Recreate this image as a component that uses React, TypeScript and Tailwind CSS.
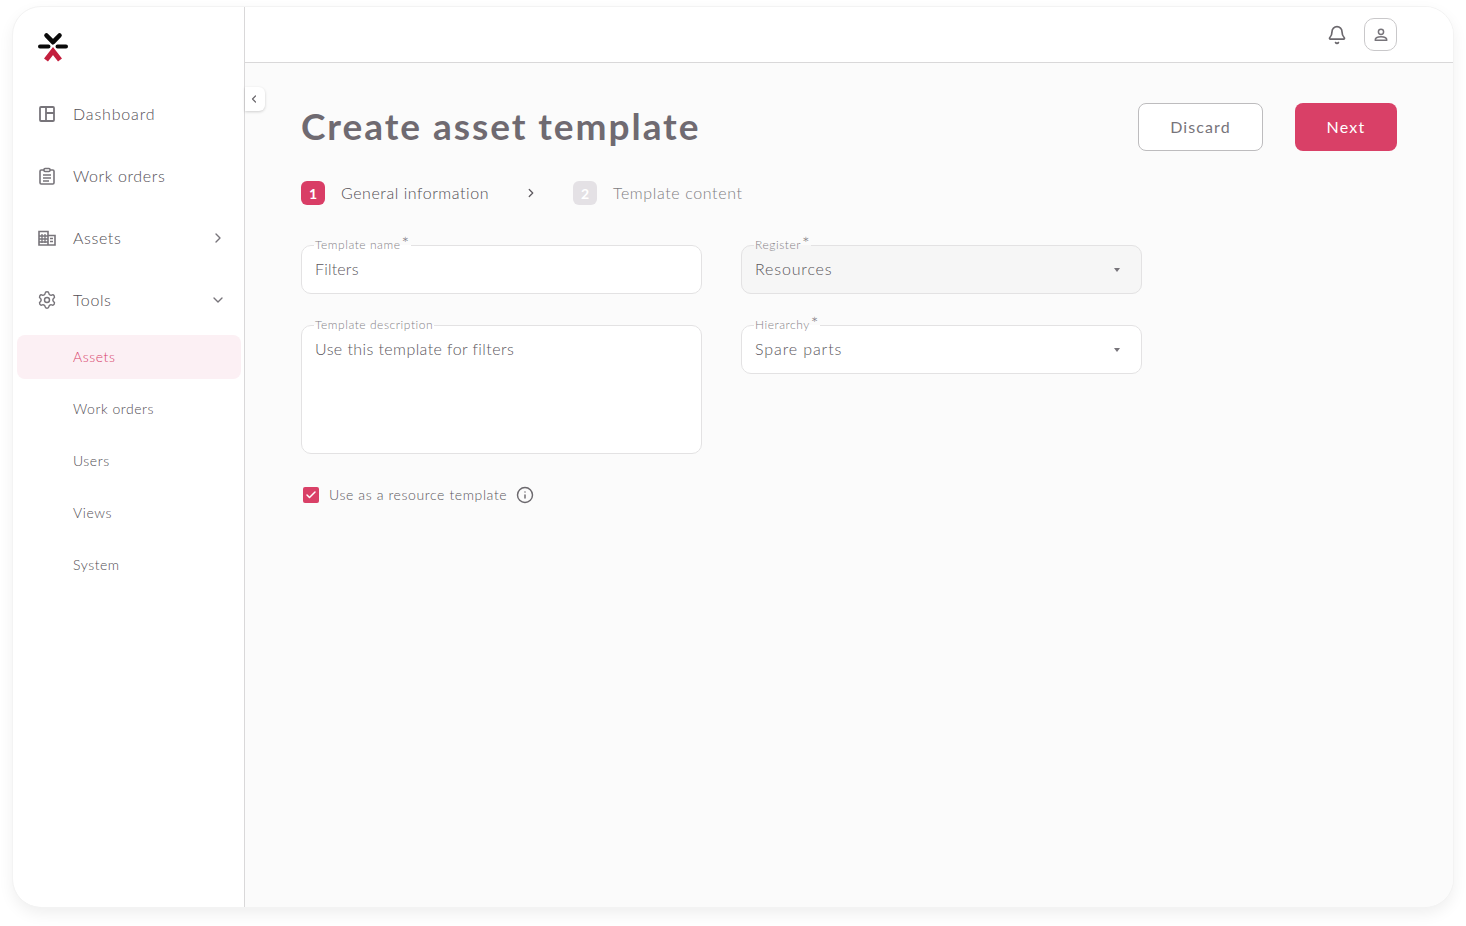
import React from "react";
import { Bell, Check, ChevronDown, ChevronLeft, ChevronRight, Info, Settings } from "lucide-react";

const font = { fontFamily: '"Lato", "Noto Sans", sans-serif' };

function Logo() {
  return (
    <svg width="30" height="30" viewBox="0 0 30 30" fill="none" strokeLinecap="round" strokeLinejoin="round">
      <path d="M2 14.5H10.5M19.5 14.5H28" stroke="#0a0a0a" strokeWidth="4" />
      <path d="M8.5 3.5L15 10.2L21.5 3.5" stroke="#0a0a0a" strokeWidth="4.6" />
      <path d="M8 28L15 19L22 28" stroke="#c41f3e" strokeWidth="5" strokeLinecap="butt" strokeLinejoin="miter" />
    </svg>
  );
}

function DashIcon() {
  return (
    <svg width="18" height="18" viewBox="0 0 18 18" fill="none" stroke="#77747a" strokeWidth="1.8">
      <rect x="2" y="2" width="14" height="14" rx="1" />
      <path d="M8 2V16M8 8H16" />
    </svg>
  );
}

function ClipIcon() {
  return (
    <svg width="18" height="18" viewBox="0 0 18 18" fill="none" stroke="#77747a" strokeWidth="1.6">
      <path d="M6 3H3.2C2.6 3 2 3.5 2 4.2V15.8C2 16.5 2.6 17 3.2 17H14.8C15.4 17 16 16.5 16 15.8V4.2C16 3.5 15.4 3 14.8 3H12" />
      <rect x="6" y="1.5" width="6" height="3" rx="1" />
      <path d="M5 8H13M5 11H13M5 14H11" />
    </svg>
  );
}

function BuildingIcon() {
  return (
    <svg width="18" height="18" viewBox="0 0 18 18" fill="none" stroke="#77747a" strokeWidth="1.6">
      <path d="M1 16V2.5H10V16ZM10 6.5H17V16H1" />
      <path d="M4 5V14M7 5V14M1 7H10M1 10H10M1 13H10" strokeWidth="1.3" />
      <path d="M12 9.5H15M12 12.5H15" strokeWidth="1.5" />
    </svg>
  );
}

function UserIcon() {
  return (
    <svg width="16" height="16" viewBox="0 0 16 16" fill="none" stroke="#77747a" strokeWidth="1.5">
      <circle cx="8" cy="4.8" r="2.6" />
      <path d="M2.2 13.2C2.2 10.8 5 9.8 8 9.8C11 9.8 13.8 10.8 13.8 13.2Z" strokeLinejoin="round" />
    </svg>
  );
}

function Caret() {
  return <div className="w-0 h-0 mt-[1px] border-x-[3.5px] border-x-transparent border-t-[4px] border-t-[#77747a]" />;
}

function NavItem({ icon, label, spacing, trailing }: { icon: React.ReactNode; label: string; spacing: string; trailing?: React.ReactNode }) {
  return (
    <div className="h-[62px] flex items-center pl-[25px] pr-[18px]">
      <div className="w-[18px] h-[18px] flex items-center justify-center">{icon}</div>
      <span className={`ml-[17px] text-[16px] text-[#524e54] font-light flex-1 ${spacing}`}>{label}</span>
      {trailing}
    </div>
  );
}

function SubItem({ label, active }: { label: string; active?: boolean }) {
  return (
    <div className={`h-[44px] pb-[2px] rounded-lg flex items-center pl-[56px] text-[14px] tracking-[0.55px] font-light ${active ? "bg-[#fcf0f4] text-[#d8406a]" : "text-[#524e54]"}`}>
      {label}
    </div>
  );
}

function Field({ label, required, className, children }: { label: string; required?: boolean; className: string; children: React.ReactNode }) {
  return (
    <fieldset className={`border border-[#e3e2e3] rounded-[10px] px-[13px] w-[401px] ${className}`}>
      <legend className="px-[1px] -ml-[1px] h-[14px] leading-[14px] text-[12px] text-[#858287] font-light tracking-[0.55px] flex items-start">
        {label}
        {required && <span className="ml-[1px] text-[18px] leading-[12px] -mt-[1px] text-[#77747a]">*</span>}
      </legend>
      {children}
    </fieldset>
  );
}

function SelectValue({ value, spacing }: { value: string; spacing: string }) {
  return (
    <div className="flex items-center justify-between pr-[8px] h-[36px] -mt-[1px]">
      <span className={`text-[16px] text-[#5a565c] font-light ${spacing}`}>{value}</span>
      <Caret />
    </div>
  );
}

export default function App() {
  return (
    <div className="w-[1466px] h-[926px] bg-white pt-[7px] pl-[13px] overflow-hidden" style={font}>
      <div className="w-[1440px] h-[900px] rounded-[28px] bg-white flex overflow-hidden shadow-[0_6px_16px_rgba(0,0,0,0.07)] outline outline-[#f3f3f3]">
        <aside className="w-[232px] shrink-0 border-r border-[#d9d8d9] bg-white">
          <div className="h-[76px] pl-[25px] pt-[25px]">
            <Logo />
          </div>
          <nav>
            <NavItem icon={<DashIcon />} label="Dashboard" spacing="tracking-[0.85px]" />
            <NavItem icon={<ClipIcon />} label="Work orders" spacing="tracking-[0.6px]" />
            <NavItem icon={<BuildingIcon />} label="Assets" spacing="tracking-[0.6px]" trailing={<ChevronRight size={16} color="#77747a" />} />
            <NavItem icon={<Settings size={20} color="#77747a" strokeWidth={1.7} className="shrink-0" />} label="Tools" spacing="tracking-[0.6px]" trailing={<ChevronDown size={16} color="#77747a" />} />
            <div className="mt-[4px] ml-[4px] mr-[3px] flex flex-col gap-[8px]">
              <SubItem label="Assets" active />
              <SubItem label="Work orders" />
              <SubItem label="Users" />
              <SubItem label="Views" />
              <SubItem label="System" />
            </div>
          </nav>
        </aside>
        <div className="flex-1 flex flex-col bg-[#fbfbfb] relative">
          <header className="h-[56px] shrink-0 bg-white border-b border-[#d9d8d9] flex items-center justify-end pr-[56px]">
            <Bell size={20} color="#6b686d" strokeWidth={2} className="mr-[17px]" />
            <div className="w-[33px] h-[33px] rounded-[10px] border border-[#c9c8ca] flex items-center justify-center">
              <UserIcon />
            </div>
          </header>
          <div className="absolute left-0 top-[80px] w-[20px] h-[24px] bg-white rounded-r-md shadow-[0_1px_3px_rgba(0,0,0,0.18)] flex items-center justify-center pr-[2px]">
            <ChevronLeft size={12} color="#6b686d" strokeWidth={2.4} />
          </div>
          <main className="px-[56px] pt-[40px]">
            <div className="flex items-center h-[48px]">
              <h1 className="flex-1 text-[37px] pb-[2px] font-bold text-[#6f6a71] tracking-[1.95px]">Create asset template</h1>
              <button className="w-[125px] h-[48px] rounded-lg border border-[#bdbcbe] bg-white text-[16px] text-[#77747a] tracking-[1.1px]">Discard</button>
              <button className="ml-[32px] w-[102px] h-[48px] rounded-lg bg-[#d94067] text-[16px] text-white tracking-[1.2px]">Next</button>
            </div>
            <div className="flex items-center mt-[30px] h-[24px]">
              <div className="w-[24px] h-[24px] rounded-md bg-[#d93d66] text-white text-[14px] font-bold flex items-center justify-center">1</div>
              <span className="ml-[16px] text-[16px] font-light text-[#524e54] tracking-[0.55px] w-[148px]">General information</span>
              <ChevronRight size={14} color="#5f5b61" strokeWidth={2.2} className="ml-[35px]" />
              <div className="ml-[35px] w-[24px] h-[24px] rounded-md bg-[#e4e1e5] text-white text-[14px] font-bold flex items-center justify-center">2</div>
              <span className="ml-[16px] text-[16px] font-light text-[#807d82] tracking-[0.62px]">Template content</span>
            </div>
            <div className="flex gap-[39px] mt-[33px]">
              <div className="flex flex-col">
                <Field label="Template name" required className="bg-white h-[56px]">
                  <div className="h-[36px] -mt-[1px] flex items-center text-[16px] text-[#5a565c] font-light tracking-[0.2px]">Filters</div>
                </Field>
                <Field label="Template description" className="bg-white h-[136px] mt-[24px]">
                  <div className="h-[36px] -mt-[1px] flex items-center text-[16px] text-[#5a565c] font-light tracking-[0.42px]">Use this template for filters</div>
                </Field>
              </div>
              <div className="flex flex-col">
                <Field label="Register" required className="bg-[#f6f6f6] h-[56px]">
                  <SelectValue value="Resources" spacing="tracking-[0.85px]" />
                </Field>
                <Field label="Hierarchy" required className="bg-white h-[56px] mt-[24px]">
                  <SelectValue value="Spare parts" spacing="tracking-[0.9px]" />
                </Field>
              </div>
            </div>
            <div className="flex items-center mt-[31px] ml-[2px] h-[20px]">
              <div className="w-[16px] h-[16px] rounded-[2px] bg-[#d94067] flex items-center justify-center">
                <Check size={12} color="white" strokeWidth={3} />
              </div>
              <span className="ml-[10px] pb-[1px] text-[14px] font-light text-[#5a565c] tracking-[0.61px]">Use as a resource template</span>
              <Info size={18} color="#6b686d" strokeWidth={1.9} className="ml-[9px]" />
            </div>
          </main>
        </div>
      </div>
    </div>
  );
}
